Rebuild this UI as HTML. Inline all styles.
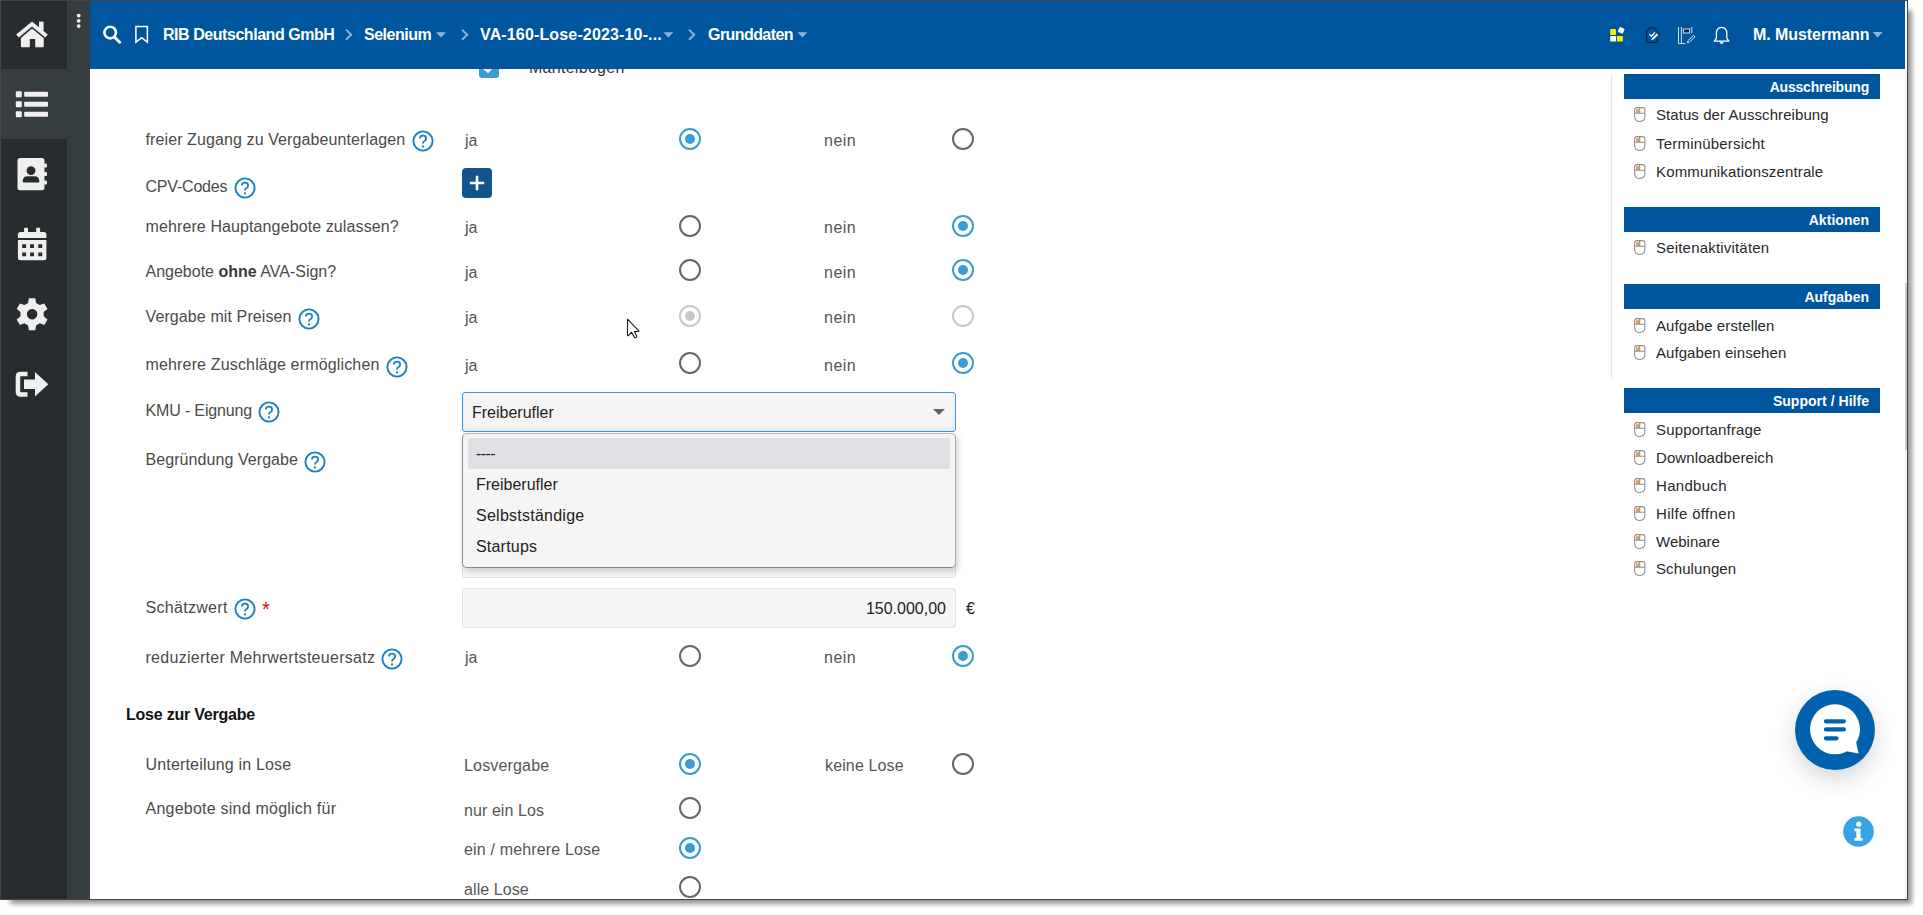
<!DOCTYPE html>
<html><head><meta charset="utf-8">
<style>
*{box-sizing:border-box;margin:0;padding:0}
html,body{width:1923px;height:915px;overflow:hidden;background:#fff;font-family:"Liberation Sans",sans-serif}
.a{position:absolute;white-space:nowrap}
#win{position:absolute;left:0;top:0;width:1908px;height:900px;background:#fff;box-shadow:7px 7px 5px -3px rgba(0,0,0,.42);overflow:hidden}
#frame{position:absolute;left:0;top:0;width:1908px;height:900px;border:1px solid #444;border-top-color:#4b4138;border-left-color:#474747}
#side1{position:absolute;left:1px;top:1px;width:66px;height:898px;background:#272c2f}
#side2{position:absolute;left:67px;top:1px;width:23px;height:898px;background:#363d40}
#hdr{position:absolute;left:90px;top:1px;width:1815px;height:68px;background:#00559f}
.lbl{position:absolute;font-size:16px;color:#4a4a4a;white-space:nowrap;line-height:18px}
.opt{position:absolute;font-size:16px;color:#555;white-space:nowrap;line-height:18px}
.r{position:absolute;width:22px;height:22px;border-radius:50%;border:2px solid #666}
.r.on{border-color:#3a9bd5}
.r.on::after{content:"";position:absolute;left:4px;top:4px;width:10px;height:10px;border-radius:50%;background:#3a9bd5}
.r.dis{border-color:#c8c8c8}
.r.dis.on::after{background:#c8c8c8}
.help{position:absolute;width:21px;height:21px}
.sel{position:absolute;font-size:16px;color:#222;white-space:nowrap;line-height:18px}
.hd{position:absolute;font-size:16px;color:#111;font-weight:bold;white-space:nowrap;line-height:18px;letter-spacing:-0.5px}
.rp{position:absolute;left:1623px;width:256px;height:25px;background:#00559f;color:#fff;font-weight:bold;font-size:14px;text-align:right;padding-right:12px;line-height:25px}
.ri{position:absolute;left:1655px;font-size:15px;color:#222;white-space:nowrap}
.mi{position:absolute;left:1633px;width:12px;height:15px}
</style></head><body>
<div id="win">
<div id="side1"></div>
<div id="side2"></div>
<div style="position:absolute;left:1px;top:69px;width:89px;height:70px;background:#363d40"></div>
<svg class="a" style="left:0;top:0" width="90" height="420" viewBox="0 0 90 420">
<g fill="#efefef">
<!-- home -->
<path d="M16.2 34.6 L32 21.5 L47.8 34.6 L45.2 37.6 L32 26.6 L18.8 37.6 Z"/>
<rect x="39" y="21.6" width="4.6" height="9"/>
<path d="M32 28.4 L43.8 38.2 L43.8 46.2 Q43.8 47.2 42.8 47.2 L35.2 47.2 L35.2 39 L29.8 39 L29.8 47.2 L21.9 47.2 Q20.9 47.2 20.9 46.2 L20.9 38 Z"/>
<!-- dots -->
<circle cx="78.7" cy="15.6" r="1.9"/><circle cx="78.7" cy="20.8" r="1.9"/><circle cx="78.7" cy="26.1" r="1.9"/>
<!-- list -->
<rect x="15.8" y="91.2" width="6" height="6" rx="1"/><rect x="15.8" y="101.2" width="6" height="6" rx="1"/><rect x="15.8" y="111.2" width="6" height="6" rx="1"/>
<rect x="24.2" y="91.8" width="23.8" height="5" rx="0.8"/><rect x="24.2" y="101.8" width="23.8" height="5" rx="0.8"/><rect x="24.2" y="111.8" width="23.8" height="5" rx="0.8"/>
<!-- contacts -->
<path fill-rule="evenodd" d="M20 158 L42 158 Q44.5 158 44.5 160.5 L44.5 187.7 Q44.5 190.2 42 190.2 L20 190.2 Q17.5 190.2 17.5 187.7 L17.5 160.5 Q17.5 158 20 158 Z M31 166.2 A4.4 4.4 0 1 0 31.01 166.2 Z M23.5 182.5 L38.5 182.5 Q39.3 182.5 39.3 181.5 Q39.3 176.2 34.5 176.2 L27.5 176.2 Q22.7 176.2 22.7 181.5 Q22.7 182.5 23.5 182.5 Z"/>
<rect x="44" y="163.5" width="3" height="4" rx="1"/><rect x="44" y="172" width="3" height="4" rx="1"/><rect x="44" y="180.5" width="3" height="4" rx="1"/>
<!-- calendar -->
<rect x="24.1" y="227.8" width="3.9" height="6" rx="0.6"/><rect x="36.2" y="227.8" width="3.9" height="6" rx="0.6"/>
<path d="M20.5 232 L43.8 232 Q46.4 232 46.4 234.6 L46.4 238 L17.9 238 L17.9 234.6 Q17.9 232 20.5 232 Z"/>
<path fill-rule="evenodd" d="M17.9 240 L46.4 240 L46.4 257.8 Q46.4 260.3 43.9 260.3 L20.4 260.3 Q17.9 260.3 17.9 257.8 Z M22.2 244.2 h3.9 v3.9 h-3.9 Z M30.1 244.2 h3.9 v3.9 h-3.9 Z M38.3 244.2 h3.9 v3.9 h-3.9 Z M22.2 252.4 h3.9 v3.9 h-3.9 Z M30.1 252.4 h3.9 v3.9 h-3.9 Z M38.3 252.4 h3.9 v3.9 h-3.9 Z"/>
<!-- gear -->
<g transform="translate(32.1 314.2)">
<path fill-rule="evenodd" d="M-3.2 -16 L3.2 -16 L4 -11.2 L7.6 -9.1 L12.2 -10.8 L15.4 -5.3 L11.6 -2.1 L11.6 2.1 L15.4 5.3 L12.2 10.8 L7.6 9.1 L4 11.2 L3.2 16 L-3.2 16 L-4 11.2 L-7.6 9.1 L-12.2 10.8 L-15.4 5.3 L-11.6 2.1 L-11.6 -2.1 L-15.4 -5.3 L-12.2 -10.8 L-7.6 -9.1 L-4 -11.2 Z M0 -5.2 A5.2 5.2 0 1 0 0.01 -5.2 Z"/>
</g>
<!-- logout -->
<path d="M20.5 371.8 L27.5 371.8 L27.5 376.3 L21 376.3 Q20.2 376.3 20.2 377.1 L20.2 391.4 Q20.2 392.2 21 392.2 L27.5 392.2 L27.5 396.8 L20.5 396.8 Q15.7 396.8 15.7 392 L15.7 376.6 Q15.7 371.8 20.5 371.8 Z"/>
<path d="M24 379.5 L35 379.5 L35 372 L48.3 384.3 L35 396.6 L35 389.1 L24 389.1 Z"/>
</g></svg>
<!--MAIN-->
<div class="a" style="left:479px;top:58px;width:20px;height:20px;background:#3c9bd3;border-radius:3px"></div>
<svg class="a" style="left:479px;top:58px" width="20" height="20"><path d="M5 10 L9 13.5 L15 7" fill="none" stroke="#fff" stroke-width="2.4"/></svg>
<div class="lbl" style="left:529px;top:59px;letter-spacing:0.28px;color:#333">Mantelbogen</div>
<div class="lbl" style="left:145.5px;top:131px;letter-spacing:0.103px">freier Zugang zu Vergabeunterlagen</div>
<svg class="a" style="left:411.6px;top:130.4px" width="22" height="22" viewBox="0 0 22 22"><circle cx="11" cy="11" r="9.6" fill="none" stroke="#1b80c3" stroke-width="1.9"/><path d="M7.9 8.6 Q7.9 5.6 11 5.6 Q14.1 5.6 14.1 8.4 Q14.1 10.2 12.2 11.2 Q11 11.9 11 13.6" fill="none" stroke="#1b80c3" stroke-width="1.8"/><circle cx="11" cy="16.4" r="1.15" fill="#1b80c3"/></svg>
<div class="opt" style="left:465px;top:132px">ja</div>
<div class="r on" style="left:679px;top:128px"></div>
<div class="opt" style="left:824px;top:132px;letter-spacing:0.5px">nein</div>
<div class="r " style="left:952px;top:128px"></div>
<div class="lbl" style="left:145.5px;top:178px;letter-spacing:-0.2px">CPV-Codes</div>
<svg class="a" style="left:233.6px;top:176.5px" width="22" height="22" viewBox="0 0 22 22"><circle cx="11" cy="11" r="9.6" fill="none" stroke="#1b80c3" stroke-width="1.9"/><path d="M7.9 8.6 Q7.9 5.6 11 5.6 Q14.1 5.6 14.1 8.4 Q14.1 10.2 12.2 11.2 Q11 11.9 11 13.6" fill="none" stroke="#1b80c3" stroke-width="1.8"/><circle cx="11" cy="16.4" r="1.15" fill="#1b80c3"/></svg>
<div class="a" style="left:462px;top:168px;width:30px;height:30px;background:#13558a;border-radius:4px"></div>
<svg class="a" style="left:462px;top:168px" width="30" height="30"><path d="M15 7.8 V22.2 M7.8 15 H22.2" stroke="#fff" stroke-width="2.6"/></svg>
<div class="lbl" style="left:145.5px;top:218px;letter-spacing:0.107px">mehrere Hauptangebote zulassen?</div>
<div class="opt" style="left:465px;top:219px">ja</div>
<div class="r " style="left:679px;top:215px"></div>
<div class="opt" style="left:824px;top:219px;letter-spacing:0.5px">nein</div>
<div class="r on" style="left:952px;top:215px"></div>
<div class="lbl" style="left:145.5px;top:263px">Angebote <b style="color:#3a3a3a">ohne</b> AVA-Sign?</div>
<div class="opt" style="left:465px;top:264px">ja</div>
<div class="r " style="left:679px;top:259px"></div>
<div class="opt" style="left:824px;top:264px;letter-spacing:0.5px">nein</div>
<div class="r on" style="left:952px;top:259px"></div>
<div class="lbl" style="left:145.5px;top:308px;letter-spacing:0.106px">Vergabe mit Preisen</div>
<svg class="a" style="left:298.3px;top:307.5px" width="22" height="22" viewBox="0 0 22 22"><circle cx="11" cy="11" r="9.6" fill="none" stroke="#1b80c3" stroke-width="1.9"/><path d="M7.9 8.6 Q7.9 5.6 11 5.6 Q14.1 5.6 14.1 8.4 Q14.1 10.2 12.2 11.2 Q11 11.9 11 13.6" fill="none" stroke="#1b80c3" stroke-width="1.8"/><circle cx="11" cy="16.4" r="1.15" fill="#1b80c3"/></svg>
<div class="opt" style="left:465px;top:309px">ja</div>
<div class="r on dis" style="left:679px;top:305px"></div>
<div class="opt" style="left:824px;top:309px;letter-spacing:0.5px">nein</div>
<div class="r dis" style="left:952px;top:305px"></div>
<div class="lbl" style="left:145.5px;top:356px;letter-spacing:0.157px">mehrere Zuschläge ermöglichen</div>
<svg class="a" style="left:386.3px;top:355.5px" width="22" height="22" viewBox="0 0 22 22"><circle cx="11" cy="11" r="9.6" fill="none" stroke="#1b80c3" stroke-width="1.9"/><path d="M7.9 8.6 Q7.9 5.6 11 5.6 Q14.1 5.6 14.1 8.4 Q14.1 10.2 12.2 11.2 Q11 11.9 11 13.6" fill="none" stroke="#1b80c3" stroke-width="1.8"/><circle cx="11" cy="16.4" r="1.15" fill="#1b80c3"/></svg>
<div class="opt" style="left:465px;top:357px">ja</div>
<div class="r " style="left:679px;top:352px"></div>
<div class="opt" style="left:824px;top:357px;letter-spacing:0.5px">nein</div>
<div class="r on" style="left:952px;top:352px"></div>
<div class="lbl" style="left:145.5px;top:402px;letter-spacing:-0.15px">KMU - Eignung</div>
<svg class="a" style="left:258.4px;top:401.4px" width="22" height="22" viewBox="0 0 22 22"><circle cx="11" cy="11" r="9.6" fill="none" stroke="#1b80c3" stroke-width="1.9"/><path d="M7.9 8.6 Q7.9 5.6 11 5.6 Q14.1 5.6 14.1 8.4 Q14.1 10.2 12.2 11.2 Q11 11.9 11 13.6" fill="none" stroke="#1b80c3" stroke-width="1.8"/><circle cx="11" cy="16.4" r="1.15" fill="#1b80c3"/></svg>
<div class="lbl" style="left:145.5px;top:451px;letter-spacing:0.071px">Begründung Vergabe</div>
<svg class="a" style="left:304.4px;top:450.5px" width="22" height="22" viewBox="0 0 22 22"><circle cx="11" cy="11" r="9.6" fill="none" stroke="#1b80c3" stroke-width="1.9"/><path d="M7.9 8.6 Q7.9 5.6 11 5.6 Q14.1 5.6 14.1 8.4 Q14.1 10.2 12.2 11.2 Q11 11.9 11 13.6" fill="none" stroke="#1b80c3" stroke-width="1.8"/><circle cx="11" cy="16.4" r="1.15" fill="#1b80c3"/></svg>
<div class="a" style="left:462px;top:440px;width:494px;height:138px;background:#f5f5f5;border:1px solid #e3e3e3;border-radius:3px"></div>
<div class="a" style="left:462px;top:392px;width:494px;height:40px;background:#f5f5f5;border:1px solid #3a9be0;border-radius:3px;box-shadow:inset 0 -3px 4px rgba(0,0,0,.05)"></div>
<div class="sel" style="left:472px;top:404px">Freiberufler</div>
<svg class="a" style="left:932px;top:408px" width="14" height="8"><path d="M1 1 H13 L7 7 Z" fill="#666"/></svg>
<div class="a" style="left:462px;top:433px;width:494px;height:135px;background:#f5f5f5;border:1px solid #8a8a8a;border-top-color:#b5b5b5;border-right-color:#a8a8a8;border-radius:5px;box-shadow:2px 3px 6px rgba(0,0,0,.18)"></div>
<div class="a" style="left:468px;top:438px;width:482px;height:31px;background:#dfdfe4;border-radius:3px"></div>
<div class="sel" style="left:476px;top:445px;letter-spacing:-0.6px">----</div>
<div class="sel" style="left:476px;top:476px">Freiberufler</div>
<div class="sel" style="left:476px;top:507px;letter-spacing:0.25px">Selbstständige</div>
<div class="sel" style="left:476px;top:538px;letter-spacing:0.2px">Startups</div>
<div class="lbl" style="left:145.5px;top:599px;letter-spacing:0.3px">Schätzwert</div>
<svg class="a" style="left:233.7px;top:597.5px" width="22" height="22" viewBox="0 0 22 22"><circle cx="11" cy="11" r="9.6" fill="none" stroke="#1b80c3" stroke-width="1.9"/><path d="M7.9 8.6 Q7.9 5.6 11 5.6 Q14.1 5.6 14.1 8.4 Q14.1 10.2 12.2 11.2 Q11 11.9 11 13.6" fill="none" stroke="#1b80c3" stroke-width="1.8"/><circle cx="11" cy="16.4" r="1.15" fill="#1b80c3"/></svg>
<div class="a" style="left:262px;top:599px;font-size:20px;color:#e00;line-height:20px">*</div>
<div class="a" style="left:462px;top:588px;width:494px;height:40px;background:#f5f5f5;border:1px solid #e3e3e3;border-radius:3px"></div>
<div class="sel" style="left:846px;width:100px;text-align:right;top:600px">150.000,00</div>
<div class="sel" style="left:966px;top:600px">€</div>
<div class="lbl" style="left:145.5px;top:649px;letter-spacing:0.276px">reduzierter Mehrwertsteuersatz</div>
<svg class="a" style="left:381.4px;top:648.3px" width="22" height="22" viewBox="0 0 22 22"><circle cx="11" cy="11" r="9.6" fill="none" stroke="#1b80c3" stroke-width="1.9"/><path d="M7.9 8.6 Q7.9 5.6 11 5.6 Q14.1 5.6 14.1 8.4 Q14.1 10.2 12.2 11.2 Q11 11.9 11 13.6" fill="none" stroke="#1b80c3" stroke-width="1.8"/><circle cx="11" cy="16.4" r="1.15" fill="#1b80c3"/></svg>
<div class="opt" style="left:465px;top:649px">ja</div>
<div class="r " style="left:679px;top:645px"></div>
<div class="opt" style="left:824px;top:649px;letter-spacing:0.5px">nein</div>
<div class="r on" style="left:952px;top:645px"></div>
<div class="hd" style="left:126px;top:706px;letter-spacing:-0.22px">Lose zur Vergabe</div>
<div class="lbl" style="left:145.5px;top:756px;letter-spacing:0.174px">Unterteilung in Lose</div>
<div class="opt" style="left:464px;top:757px;letter-spacing:0.167px">Losvergabe</div>
<div class="r on" style="left:679px;top:753px"></div>
<div class="opt" style="left:825px;top:757px;letter-spacing:0.133px">keine Lose</div>
<div class="r " style="left:952px;top:753px"></div>
<div class="lbl" style="left:145.5px;top:800px;letter-spacing:0.229px">Angebote sind möglich für</div>
<div class="opt" style="left:464px;top:802px;letter-spacing:0.08px">nur ein Los</div>
<div class="r " style="left:679px;top:797px"></div>
<div class="opt" style="left:464px;top:841px;letter-spacing:0.159px">ein / mehrere Lose</div>
<div class="r on" style="left:679px;top:837px"></div>
<div class="opt" style="left:464px;top:881px;letter-spacing:0.088px">alle Lose</div>
<div class="r " style="left:679px;top:876px"></div>
<svg class="a" style="left:620px;top:312px" width="30" height="30" viewBox="0 0 30 30"><path d="M7.5 7.2 L7.5 23.2 Q7.6 24 8.4 23.6 L11.6 20.2 L14.6 25.4 Q15 25.9 15.6 25.6 L16.6 25.1 Q17 24.8 16.8 24.2 L14.4 19.5 L18.6 19.5 Q19 19.2 18.6 18.6 Z" fill="#fff" stroke="#151520" stroke-width="1.05" stroke-linejoin="round"/></svg>
<!--/MAIN-->
<!--RIGHT-->
<div class="a" style="left:1611px;top:74px;width:1px;height:305px;background:#e6e6e6"></div>
<div class="a" style="left:1624px;top:74px;width:256px;height:25px;background:#00559f"></div>
<div class="a" style="left:1624px;top:78px;width:245px;text-align:right;font-size:14px;font-weight:bold;color:#fff;line-height:18px;letter-spacing:-0.2px">Ausschreibung</div>
<svg class="a" style="left:1634px;top:107px" width="13" height="16" viewBox="0 0 13 16"><rect x="2" y="2.2" width="3.2" height="3.8" fill="#f39a4a"/><path d="M3 0.6 L8.6 0.6 Q10.9 0.6 10.9 3 L10.9 9 Q10.9 14.4 5.8 14.4 Q0.6 14.4 0.6 9 L0.6 3 Q0.6 0.6 3 0.6 Z M0.6 6.3 L10.9 6.3 M5.7 0.6 L5.7 6.3" fill="none" stroke="#8f8f8f" stroke-width="1.05"/></svg>
<div class="a" style="left:1656px;top:107px;font-size:15px;color:#282828;line-height:16px;letter-spacing:0.07px">Status der Ausschreibung</div>
<svg class="a" style="left:1634px;top:136px" width="13" height="16" viewBox="0 0 13 16"><rect x="2" y="2.2" width="3.2" height="3.8" fill="#f39a4a"/><path d="M3 0.6 L8.6 0.6 Q10.9 0.6 10.9 3 L10.9 9 Q10.9 14.4 5.8 14.4 Q0.6 14.4 0.6 9 L0.6 3 Q0.6 0.6 3 0.6 Z M0.6 6.3 L10.9 6.3 M5.7 0.6 L5.7 6.3" fill="none" stroke="#8f8f8f" stroke-width="1.05"/></svg>
<div class="a" style="left:1656px;top:136px;font-size:15px;color:#282828;line-height:16px;letter-spacing:0.2px">Terminübersicht</div>
<svg class="a" style="left:1634px;top:164px" width="13" height="16" viewBox="0 0 13 16"><rect x="2" y="2.2" width="3.2" height="3.8" fill="#f39a4a"/><path d="M3 0.6 L8.6 0.6 Q10.9 0.6 10.9 3 L10.9 9 Q10.9 14.4 5.8 14.4 Q0.6 14.4 0.6 9 L0.6 3 Q0.6 0.6 3 0.6 Z M0.6 6.3 L10.9 6.3 M5.7 0.6 L5.7 6.3" fill="none" stroke="#8f8f8f" stroke-width="1.05"/></svg>
<div class="a" style="left:1656px;top:164px;font-size:15px;color:#282828;line-height:16px;letter-spacing:0.14px">Kommunikationszentrale</div>
<div class="a" style="left:1624px;top:207px;width:256px;height:25px;background:#00559f"></div>
<div class="a" style="left:1624px;top:211px;width:245px;text-align:right;font-size:14px;font-weight:bold;color:#fff;line-height:18px;letter-spacing:0.05px">Aktionen</div>
<svg class="a" style="left:1634px;top:240px" width="13" height="16" viewBox="0 0 13 16"><rect x="2" y="2.2" width="3.2" height="3.8" fill="#f39a4a"/><path d="M3 0.6 L8.6 0.6 Q10.9 0.6 10.9 3 L10.9 9 Q10.9 14.4 5.8 14.4 Q0.6 14.4 0.6 9 L0.6 3 Q0.6 0.6 3 0.6 Z M0.6 6.3 L10.9 6.3 M5.7 0.6 L5.7 6.3" fill="none" stroke="#8f8f8f" stroke-width="1.05"/></svg>
<div class="a" style="left:1656px;top:240px;font-size:15px;color:#282828;line-height:16px;letter-spacing:0.19px">Seitenaktivitäten</div>
<div class="a" style="left:1624px;top:284px;width:256px;height:25px;background:#00559f"></div>
<div class="a" style="left:1624px;top:288px;width:245px;text-align:right;font-size:14px;font-weight:bold;color:#fff;line-height:18px;letter-spacing:0px">Aufgaben</div>
<svg class="a" style="left:1634px;top:318px" width="13" height="16" viewBox="0 0 13 16"><rect x="2" y="2.2" width="3.2" height="3.8" fill="#f39a4a"/><path d="M3 0.6 L8.6 0.6 Q10.9 0.6 10.9 3 L10.9 9 Q10.9 14.4 5.8 14.4 Q0.6 14.4 0.6 9 L0.6 3 Q0.6 0.6 3 0.6 Z M0.6 6.3 L10.9 6.3 M5.7 0.6 L5.7 6.3" fill="none" stroke="#8f8f8f" stroke-width="1.05"/></svg>
<div class="a" style="left:1656px;top:318px;font-size:15px;color:#282828;line-height:16px;letter-spacing:0.1px">Aufgabe erstellen</div>
<svg class="a" style="left:1634px;top:345px" width="13" height="16" viewBox="0 0 13 16"><rect x="2" y="2.2" width="3.2" height="3.8" fill="#f39a4a"/><path d="M3 0.6 L8.6 0.6 Q10.9 0.6 10.9 3 L10.9 9 Q10.9 14.4 5.8 14.4 Q0.6 14.4 0.6 9 L0.6 3 Q0.6 0.6 3 0.6 Z M0.6 6.3 L10.9 6.3 M5.7 0.6 L5.7 6.3" fill="none" stroke="#8f8f8f" stroke-width="1.05"/></svg>
<div class="a" style="left:1656px;top:345px;font-size:15px;color:#282828;line-height:16px;letter-spacing:0.06px">Aufgaben einsehen</div>
<div class="a" style="left:1624px;top:388px;width:256px;height:25px;background:#00559f"></div>
<div class="a" style="left:1624px;top:392px;width:245px;text-align:right;font-size:14px;font-weight:bold;color:#fff;line-height:18px;letter-spacing:0.03px">Support / Hilfe</div>
<svg class="a" style="left:1634px;top:422px" width="13" height="16" viewBox="0 0 13 16"><rect x="2" y="2.2" width="3.2" height="3.8" fill="#f39a4a"/><path d="M3 0.6 L8.6 0.6 Q10.9 0.6 10.9 3 L10.9 9 Q10.9 14.4 5.8 14.4 Q0.6 14.4 0.6 9 L0.6 3 Q0.6 0.6 3 0.6 Z M0.6 6.3 L10.9 6.3 M5.7 0.6 L5.7 6.3" fill="none" stroke="#8f8f8f" stroke-width="1.05"/></svg>
<div class="a" style="left:1656px;top:422px;font-size:15px;color:#282828;line-height:16px;letter-spacing:0.15px">Supportanfrage</div>
<svg class="a" style="left:1634px;top:450px" width="13" height="16" viewBox="0 0 13 16"><rect x="2" y="2.2" width="3.2" height="3.8" fill="#f39a4a"/><path d="M3 0.6 L8.6 0.6 Q10.9 0.6 10.9 3 L10.9 9 Q10.9 14.4 5.8 14.4 Q0.6 14.4 0.6 9 L0.6 3 Q0.6 0.6 3 0.6 Z M0.6 6.3 L10.9 6.3 M5.7 0.6 L5.7 6.3" fill="none" stroke="#8f8f8f" stroke-width="1.05"/></svg>
<div class="a" style="left:1656px;top:450px;font-size:15px;color:#282828;line-height:16px;letter-spacing:0.1px">Downloadbereich</div>
<svg class="a" style="left:1634px;top:478px" width="13" height="16" viewBox="0 0 13 16"><rect x="2" y="2.2" width="3.2" height="3.8" fill="#f39a4a"/><path d="M3 0.6 L8.6 0.6 Q10.9 0.6 10.9 3 L10.9 9 Q10.9 14.4 5.8 14.4 Q0.6 14.4 0.6 9 L0.6 3 Q0.6 0.6 3 0.6 Z M0.6 6.3 L10.9 6.3 M5.7 0.6 L5.7 6.3" fill="none" stroke="#8f8f8f" stroke-width="1.05"/></svg>
<div class="a" style="left:1656px;top:478px;font-size:15px;color:#282828;line-height:16px;letter-spacing:0.3px">Handbuch</div>
<svg class="a" style="left:1634px;top:506px" width="13" height="16" viewBox="0 0 13 16"><rect x="2" y="2.2" width="3.2" height="3.8" fill="#f39a4a"/><path d="M3 0.6 L8.6 0.6 Q10.9 0.6 10.9 3 L10.9 9 Q10.9 14.4 5.8 14.4 Q0.6 14.4 0.6 9 L0.6 3 Q0.6 0.6 3 0.6 Z M0.6 6.3 L10.9 6.3 M5.7 0.6 L5.7 6.3" fill="none" stroke="#8f8f8f" stroke-width="1.05"/></svg>
<div class="a" style="left:1656px;top:506px;font-size:15px;color:#282828;line-height:16px;letter-spacing:0.33px">Hilfe öffnen</div>
<svg class="a" style="left:1634px;top:534px" width="13" height="16" viewBox="0 0 13 16"><rect x="2" y="2.2" width="3.2" height="3.8" fill="#f39a4a"/><path d="M3 0.6 L8.6 0.6 Q10.9 0.6 10.9 3 L10.9 9 Q10.9 14.4 5.8 14.4 Q0.6 14.4 0.6 9 L0.6 3 Q0.6 0.6 3 0.6 Z M0.6 6.3 L10.9 6.3 M5.7 0.6 L5.7 6.3" fill="none" stroke="#8f8f8f" stroke-width="1.05"/></svg>
<div class="a" style="left:1656px;top:534px;font-size:15px;color:#282828;line-height:16px;letter-spacing:0px">Webinare</div>
<svg class="a" style="left:1634px;top:561px" width="13" height="16" viewBox="0 0 13 16"><rect x="2" y="2.2" width="3.2" height="3.8" fill="#f39a4a"/><path d="M3 0.6 L8.6 0.6 Q10.9 0.6 10.9 3 L10.9 9 Q10.9 14.4 5.8 14.4 Q0.6 14.4 0.6 9 L0.6 3 Q0.6 0.6 3 0.6 Z M0.6 6.3 L10.9 6.3 M5.7 0.6 L5.7 6.3" fill="none" stroke="#8f8f8f" stroke-width="1.05"/></svg>
<div class="a" style="left:1656px;top:561px;font-size:15px;color:#282828;line-height:16px;letter-spacing:0.1px">Schulungen</div>
<div class="a" style="left:1795px;top:690px;width:80px;height:80px;border-radius:50%;background:#0062ae;box-shadow:0 9px 24px rgba(0,0,0,.17)"></div>
<svg class="a" style="left:1795px;top:690px" width="80" height="80" viewBox="0 0 80 80"><circle cx="40" cy="39.3" r="25" fill="#fff"/><path d="M50 61 L63.6 63.4 L60.6 50 Z" fill="#fff"/><path d="M30.9 31.3 H48.9 M30.9 39.4 H48.9 M30.9 48.3 H41.5" stroke="#0062ae" stroke-width="4.2" stroke-linecap="round"/></svg>
<svg class="a" style="left:1843px;top:816px" width="31" height="31" viewBox="0 0 31 31"><circle cx="15.5" cy="15.5" r="15.3" fill="#38a3e4"/><circle cx="15.8" cy="8.2" r="2.6" fill="#fff"/><path d="M11.4 12.4 L17.6 12.4 L17.6 22 L19.6 22 L19.6 24.8 L11.4 24.8 L11.4 22 L13.4 22 L13.4 15.2 L11.4 15.2 Z" fill="#fff"/></svg>
<div class="a" style="left:1905px;top:69px;width:2px;height:831px;background:#f3f3f3"></div>
<div class="a" style="left:1905px;top:283px;width:2px;height:167px;background:#c9c9c9"></div>
<!--/RIGHT-->
<div id="hdr"></div>
<svg class="a" style="left:0;top:0" width="1910" height="70" viewBox="0 0 1910 70">
<g fill="none" stroke="#fff">
<circle cx="110.2" cy="32.6" r="5.8" stroke-width="2.6"/>
<path d="M114.6 37.2 L119.6 42.2" stroke-width="3" stroke-linecap="round"/>
<path d="M135.9 26.6 L147.4 26.6 L147.4 42.2 L141.65 37.6 L135.9 42.2 Z" stroke-width="1.5"/>
</g>
<g fill="none" stroke="#8fb4da" stroke-width="1.9">
<path d="M346.0 29.6 L351.2 34.7 L346.0 39.8"/>
<path d="M462.0 29.6 L467.2 34.7 L462.0 39.8"/>
<path d="M689.0 29.6 L694.2 34.7 L689.0 39.8"/>
</g>
<g fill="#8fb4da">
<path d="M436 32.3 L446 32.3 L441 37.6 Z"/>
<path d="M663.4 32.3 L673.4 32.3 L668.4 37.6 Z"/>
<path d="M797.4 32.3 L807.4 32.3 L802.4 37.6 Z"/>
<path d="M1872.6 32 L1882.6 32 L1877.6 37.5 Z"/>
</g>
<!-- grid icon -->
<rect x="1610.2" y="29.1" width="5.8" height="5.8" fill="#f5ee00" rx="0.6"/>
<rect x="1616.9" y="36" width="6" height="5.6" fill="#f5ee00" rx="0.6"/>
<rect x="1610.2" y="36" width="5.8" height="5.6" fill="#fff" rx="0.6"/>
<rect x="1618.5" y="27.6" width="5.4" height="5.4" fill="#fff" transform="rotate(25 1621.2 30.3)" rx="0.8"/>
<!-- clipboard -->
<path d="M1648.2 29.6 Q1646.6 29.6 1646.6 31.2 L1646.6 41.2 Q1646.6 42.4 1647.8 42.4 L1656 42.4 Q1657.2 42.4 1657.2 41.2 L1657.2 38.5" fill="none" stroke="#17233d" stroke-width="1.3"/>
<path d="M1648.6 29.6 Q1648.6 27.4 1651.8 27.4 Q1655 27.4 1655 29.6 Q1657.2 29.6 1657.2 31.5" fill="none" stroke="#17233d" stroke-width="1.3"/>
<path d="M1649.4 34.3 L1651.5 36.2 L1654.8 32.4" fill="none" stroke="#fff" stroke-width="1.4"/>
<path d="M1651.4 40 L1652 38.2 L1656.8 33.4 L1658.4 34.8 L1653.4 39.6 Z" fill="#fff"/>
<path d="M1657.6 33 L1659.2 34.4" stroke="#17233d" stroke-width="1.2"/>
<!-- notebook -->
<g fill="none" stroke="#d4e2f2" stroke-width="1">
<path d="M1678.5 27 L1678.5 43.6 L1685.5 43.6"/>
<path d="M1681.4 27 L1681.4 43.6"/>
<path d="M1691.8 27 L1691.8 33.1"/>
<rect x="1683.4" y="29" width="6.2" height="4" fill="#0d2240"/>
<path d="M1687.4 42.8 L1688 40.6 L1693.6 35.4 L1695 36.8 L1689.4 42.2 Z"/>
</g>
<!-- bell -->
<path d="M1721.6 27.4 Q1716.4 27.6 1716.4 33.6 L1716.4 37.8 Q1716.4 39.2 1714.6 40.4 L1714.4 41.2 L1728.8 41.2 L1728.6 40.4 Q1726.8 39.2 1726.8 37.8 L1726.8 33.6 Q1726.8 27.6 1721.6 27.4 Z" fill="none" stroke="#fff" stroke-width="1.25" stroke-linejoin="round"/>
<path d="M1719.8 41.6 L1721.6 43.6 L1723.4 41.6" fill="none" stroke="#fff" stroke-width="1.2"/>
</svg>
<div class="a" style="left:163px;top:26px;font-size:16px;font-weight:bold;color:#fff;letter-spacing:-0.45px;line-height:18px">RIB Deutschland GmbH</div>
<div class="a" style="left:364px;top:26px;font-size:16px;font-weight:bold;color:#fff;letter-spacing:-0.5px;line-height:18px">Selenium</div>
<div class="a" style="left:480px;top:26px;font-size:16px;font-weight:bold;color:#fff;letter-spacing:0.15px;line-height:18px">VA-160-Lose-2023-10-...</div>
<div class="a" style="left:708px;top:26px;font-size:16px;font-weight:bold;color:#fff;letter-spacing:-0.57px;line-height:18px">Grunddaten</div>
<div class="a" style="left:1753px;top:26px;font-size:16px;font-weight:bold;color:#fff;letter-spacing:-0.07px;line-height:18px">M. Mustermann</div>
</div>
<div id="frame"></div>
</body></html>
